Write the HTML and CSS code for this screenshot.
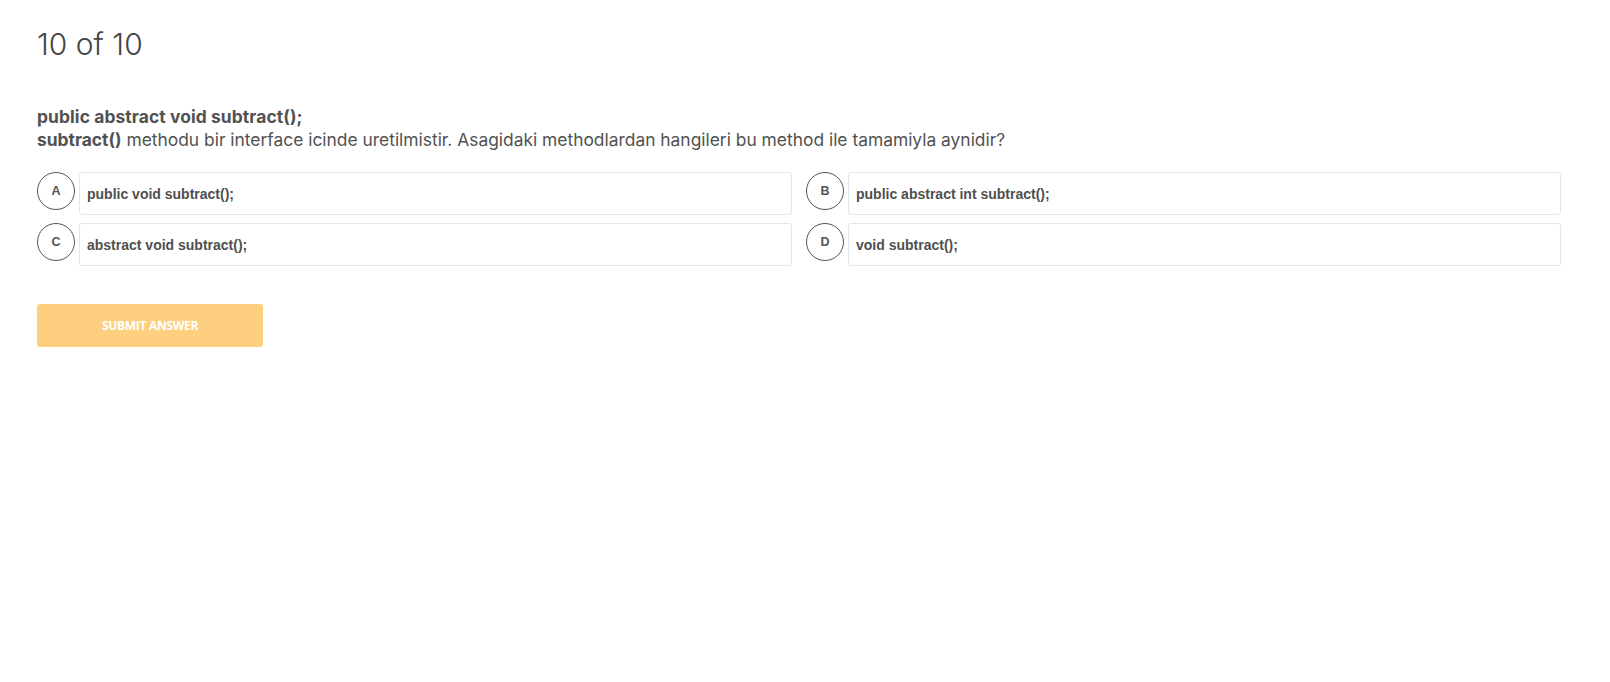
FILE: index.html
```html
<!DOCTYPE html>
<html lang="tr">
<head>
<meta charset="utf-8">
<title>Quiz</title>
<link rel="stylesheet" href="styles.css">
</head>
<body>
<main class="quiz">
  <h1 class="counter">10 of 10</h1>
  <div class="question">
    <p class="code-line">public abstract void subtract();</p>
    <p class="prompt"><strong>subtract()</strong> methodu bir interface icinde uretilmistir. Asagidaki methodlardan hangileri bu method ile tamamiyla aynidir?</p>
  </div>
  <div class="options">
    <div class="option"><span class="letter">A</span><div class="answer">public void subtract();</div></div>
    <div class="option"><span class="letter">B</span><div class="answer">public abstract int subtract();</div></div>
    <div class="option"><span class="letter">C</span><div class="answer">abstract void subtract();</div></div>
    <div class="option"><span class="letter">D</span><div class="answer">void subtract();</div></div>
  </div>
  <button class="submit" type="button">SUBMIT ANSWER</button>
</main>
</body>
</html>
```
FILE: styles.css
```css
html, body {
  margin: 0;
  padding: 0;
  background: #ffffff;
}
body {
  font-family: Inter, "Noto Sans", sans-serif;
  color: #525252;
}
.quiz {
  padding: 24px 49px 40px 37px;
}
.counter {
  margin: 0;
  font-size: 30px;
  font-weight: 300;
  line-height: 40px;
  color: #444444;
}
.question {
  margin-top: 41px;
  font-size: 17.4px;
  line-height: 23px;
}
.question p {
  margin: 0;
}
.code-line {
  font-weight: 700;
  letter-spacing: 0.1px;
}
.prompt strong {
  font-weight: 700;
}
.options {
  margin-top: 21px;
  display: grid;
  grid-template-columns: 1fr 1fr;
  column-gap: 14px;
  row-gap: 8px;
}
.option {
  display: flex;
  align-items: flex-start;
  gap: 4px;
}
.letter {
  flex: 0 0 auto;
  width: 36px;
  height: 36px;
  border: 1px solid #555555;
  border-radius: 50%;
  display: flex;
  align-items: center;
  justify-content: center;
  font-family: "Liberation Sans", Arial, sans-serif;
  font-weight: 700;
  font-size: 12.5px;
  color: #555555;
}
.answer {
  flex: 1 1 auto;
  height: 41px;
  border: 1px solid #dfe8f1;
  border-radius: 3px;
  display: flex;
  align-items: center;
  padding-left: 7px;
  font-family: "Liberation Sans", Arial, sans-serif;
  font-weight: 700;
  font-size: 14px;
  color: #4f4f4f;
}
.submit {
  display: block;
  margin-top: 38px;
  width: 226px;
  height: 43px;
  border: none;
  border-radius: 3px;
  background: #fecf7f;
  color: #ffffff;
  font-family: "Open Sans", sans-serif;
  font-weight: 700;
  font-size: 12px;
  letter-spacing: -0.3px;
  cursor: pointer;
}
```
